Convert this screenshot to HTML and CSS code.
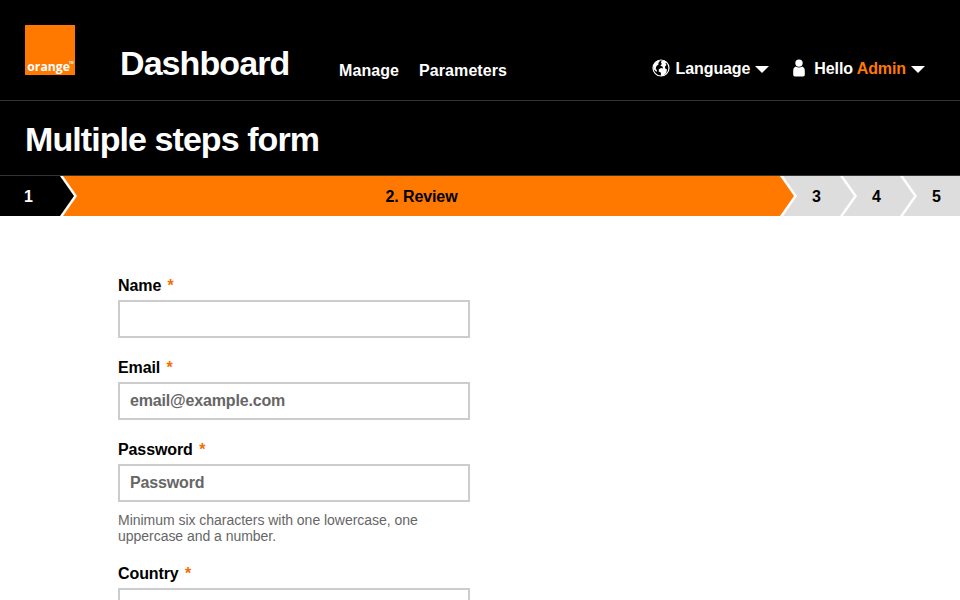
FILE: index.html
```html
<!DOCTYPE html>
<html lang="en">
<head>
<meta charset="utf-8">
<title>Multiple steps form</title>
<link rel="stylesheet" href="styles.css">
</head>
<body>
<header class="header">
  <svg class="logo" viewBox="0 0 50 50" role="img" aria-label="Orange">
    <rect width="50" height="50" fill="#ff7900"/>
    <text class="logo-name" x="2.3" y="46" textLength="42.6" lengthAdjust="spacingAndGlyphs">orange</text>
    <text class="logo-tm" x="44" y="39">TM</text>
  </svg>
  <div class="brand">Dashboard</div>
  <nav class="nav">
    <a>Manage</a>
    <a>Parameters</a>
  </nav>
  <div class="tools">
    <a class="tool">
      <svg class="globe" viewBox="0 0 18 18">
        <circle cx="9" cy="9" r="8" fill="#000" stroke="#fff" stroke-width="1.2"/>
        <path fill="#fff" d="M2 5 4.5 2.3 7 1.2l.8 1.3L6.300 4 6.500 5.500 4.500 7 3.700 9.500 5 11.500 4.500 13 1.500 10zM9.500 2 12 1.200 14.500 2.700 13.500 4.200 14.500 6 13 7.500 13.200 9.500 15 10.500 14.200 14 11 16.800 8.800 17 9 13.800 6.700 12.500 6.800 10.200 9 9 11 9.500 10.500 7.500 8.300 6.700 9.800 5 9 3.500z"/>
      </svg>
      <span>Language</span>
      <svg class="caret" viewBox="0 0 14 7"><path fill="#fff" d="M0 0h14L7 7z"/></svg>
    </a>
    <a class="tool">
      <svg class="user" viewBox="0 0 12 18">
        <circle cx="6" cy="4.1" r="3.7" fill="#fff"/>
        <path fill="#fff" d="M2.8 7.6Q6 9.600 9.2 7.6 11.800 8.600 11.800 12v3.800q0 1.700-1.700 1.700H1.900Q.2 17.500.2 15.800V12Q.2 8.600 2.800 7.600z"/>
      </svg>
      <span>Hello <span class="accent">Admin</span></span>
      <svg class="caret" viewBox="0 0 14 7"><path fill="#fff" d="M0 0h14L7 7z"/></svg>
    </a>
  </div>
</header>
<div class="title-bar"><h1>Multiple steps form</h1></div>
<ol class="steps">
  <li class="step done"><span>1</span></li>
  <li class="step current"><span>2. Review</span></li>
  <li class="step"><span>3</span></li>
  <li class="step"><span>4</span></li>
  <li class="step"><span>5</span></li>
</ol>
<form class="form">
  <div class="field">
    <label for="name">Name <span class="required">*</span></label>
    <input id="name" type="text">
  </div>
  <div class="field">
    <label for="email">Email <span class="required">*</span></label>
    <input id="email" type="email" placeholder="email@example.com">
  </div>
  <div class="field">
    <label for="password">Password <span class="required">*</span></label>
    <input id="password" type="password" placeholder="Password">
    <p class="hint">Minimum six characters with one lowercase, one uppercase and a number.</p>
  </div>
  <div class="field">
    <label for="country">Country <span class="required">*</span></label>
    <input id="country" type="text">
  </div>
</form>
</body>
</html>
```
FILE: styles.css
```css
* { box-sizing: border-box; }
html { overflow: hidden; }
body {
  margin: 0;
  height: 600px;
  overflow: hidden;
  background: #fff;
  color: #000;
  font: bold 16px/18px "Liberation Sans", Arial, sans-serif;
  letter-spacing: -.1px;
}
.header {
  display: flex;
  align-items: flex-end;
  height: 101px;
  padding: 0 35px 25px 25px;
  border-bottom: 1px solid #333;
  background: #000;
  color: #fff;
}
.logo { width: 50px; height: 50px; }
.logo-name { font: bold 12.5px "Open Sans", sans-serif; letter-spacing: 0; fill: #fff; }
.logo-tm { font: bold 3px "Open Sans", sans-serif; letter-spacing: 0; fill: #fff; }
.brand {
  width: 168px;
  margin: 0 0 -8px 45px;
  font-size: 34px;
  line-height: 40px;
  letter-spacing: -.92px;
  white-space: nowrap;
}
.nav { display: flex; gap: 20px; margin: 0 0 -5px 51px; letter-spacing: .08px; }
.tools { display: flex; gap: 24px; margin: 0 0 -3px auto; }
.tool { display: flex; align-items: center; }
.globe { width: 18px; height: 18px; margin: -2px 6px 0 0; }
.user { width: 12px; height: 18px; margin: -2px 9px 0 0; }
.caret { width: 14px; height: 7px; margin-left: 5px; }
.accent { color: #ff7900; }
.title-bar {
  height: 75px;
  padding: 18px 25px 0;
  border-bottom: 1px solid #333;
  background: #000;
  color: #fff;
}
h1 { margin: 0; font-size: 34px; line-height: 40px; letter-spacing: -.93px; }
.steps {
  display: grid;
  grid-template-columns: 60px 1fr 60px 60px 60px;
  height: 40px;
  margin: 0;
  padding: 0;
  list-style: none;
}
.step {
  position: relative;
  height: 40px;
  padding: 1px 0 0 13px;
  background: #ddd;
  line-height: 39px;
  text-align: center;
}
.step::before,
.step::after {
  content: "";
  position: absolute;
  z-index: 1;
  top: 0;
  left: 100%;
  width: 17px;
  height: 40px;
  background: #fff;
  clip-path: polygon(0 0, 3px 0, 100% 50%, 3px 100%, 0 100%);
}
.step::after {
  width: 14px;
  background: #ddd;
  clip-path: polygon(0 0, 100% 50%, 0 100%);
}
.step:last-child::before,
.step:last-child::after { content: none; }
.step.done, .step.done::after { background: #000; }
.step.done { padding: 1px 3px 0 0; color: #fff; }
.step.current, .step.current::after { background: #ff7900; }
.step.current { padding-left: 3px; }
.form { width: 352px; margin: 61px 0 0 118px; }
.field { margin-bottom: 21px; }
label { display: block; height: 23px; }
.required { margin-left: 2px; color: #f16e00; }
input {
  display: block;
  width: 100%;
  height: 38px;
  padding: 0 10px 1px;
  border: 2px solid #ccc;
  border-radius: 0;
  background: #fff;
  font: inherit;
  letter-spacing: -.16px;
}
input::placeholder { color: #666; opacity: 1; }
.hint {
  margin: 10px 0 0;
  color: #666;
  font-size: 14px;
  font-weight: normal;
  line-height: 16px;
  letter-spacing: -.03px;
}
```
